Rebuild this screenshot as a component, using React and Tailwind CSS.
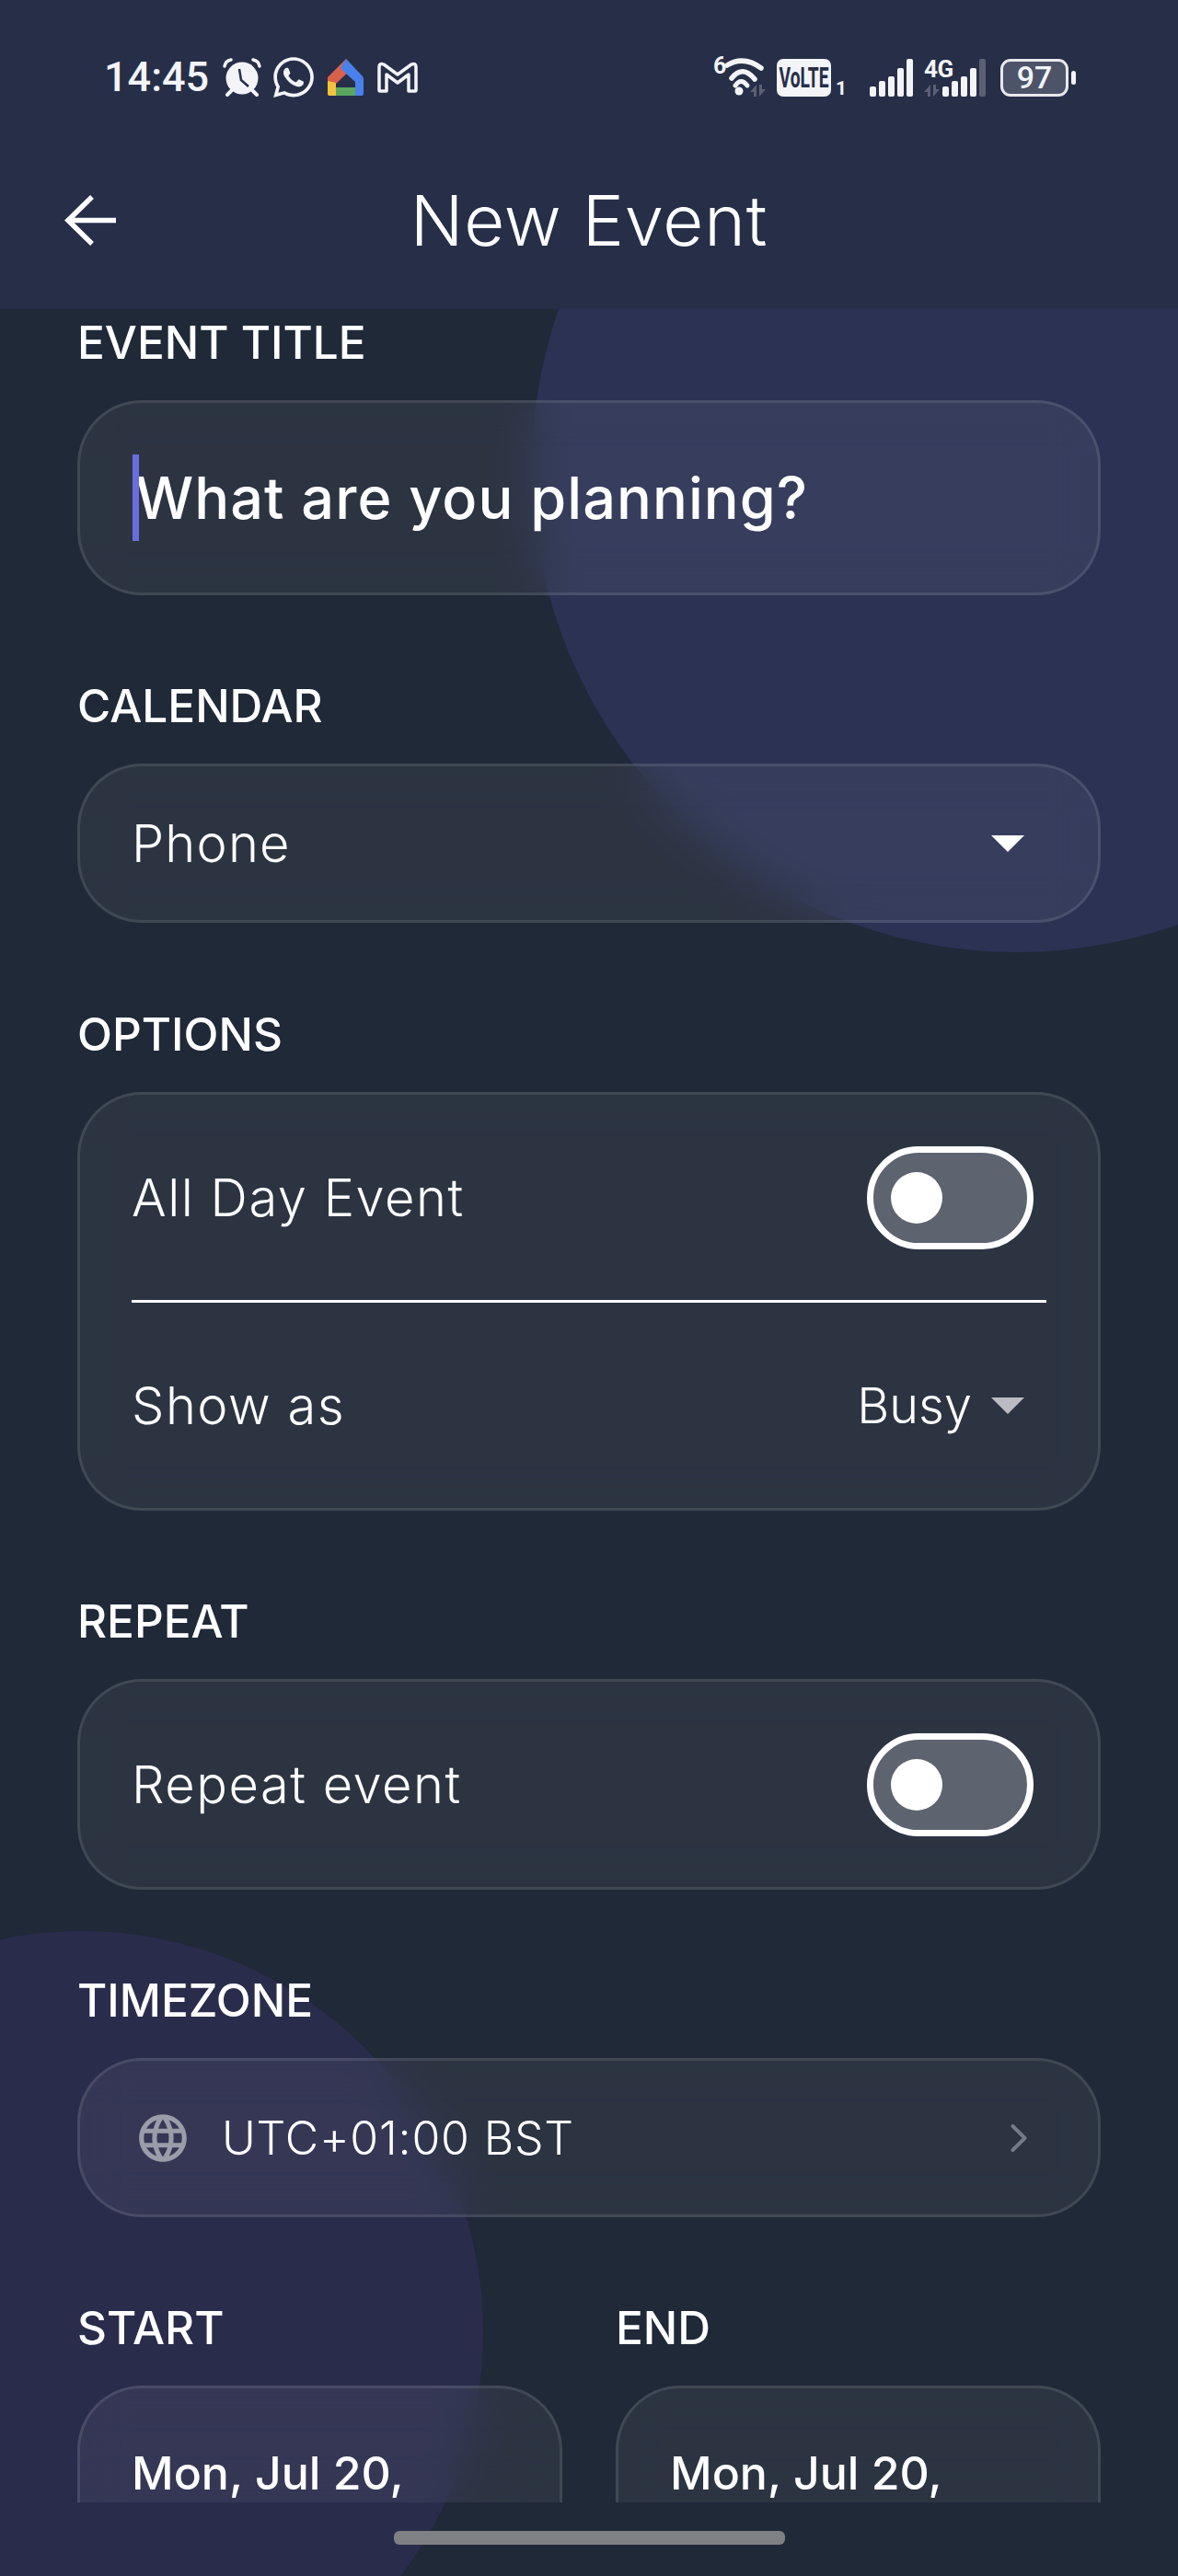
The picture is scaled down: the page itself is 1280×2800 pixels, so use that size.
import React from 'react';
import { ChevronRight } from 'lucide-react';
import { FaWhatsapp } from 'react-icons/fa';
import { MdLanguage } from 'react-icons/md';

const AlarmIcon = () => (
  <svg width="40" height="40" viewBox="0 0 40 40" className="shrink-0 overflow-visible">
    <path d="M1 8 Q2 2 8 1" fill="none" stroke="#f3f4f8" strokeWidth="3.5" strokeLinecap="round" />
    <path d="M39 8 Q38 2 32 1" fill="none" stroke="#f3f4f8" strokeWidth="3.5" strokeLinecap="round" />
    <path d="M9 34 L4 39 M31 34 L36 39" stroke="#f3f4f8" strokeWidth="4" strokeLinecap="round" />
    <circle cx="20" cy="21" r="17.5" fill="#f3f4f8" />
    <path d="M17 11 L19 23 L27 30" fill="none" stroke="#262e48" strokeWidth="2.5" />
  </svg>
);

const HomeIcon = () => (
  <svg width="40" height="40" viewBox="0 0 40 40" className="shrink-0">
    <path d="M20 0 L28 9 L9 27 L0 33 V20 Z" fill="#d9604a" />
    <path d="M20 0 L38 19 Q39 20 39 22 V38 Q39 40 37 40 H30 V25 L20 16 L14 10 Z" fill="#4a80ec" />
    <path d="M0 24 L9 26 V40 H2 Q0 40 0 38 Z" fill="#f4c33d" />
    <rect x="9" y="31" width="21" height="9" fill="#5aa65e" />
  </svg>
);

const GmailIcon = () => (
  <svg width="44" height="34" viewBox="0 0 44 34" className="shrink-0">
    <path
      d="M2 31 V6 Q2 1 7 3 L22 14 L37 3 Q42 1 42 6 V31 Q42 32 41 32 H34 V14 L22 23 L10 14 V32 H3 Q2 32 2 31 Z"
      fill="none"
      stroke="#f3f4f8"
      strokeWidth="3.5"
      strokeLinejoin="round"
    />
  </svg>
);

const TransferArrows = () => (
  <svg width="17" height="13" viewBox="0 0 17 13" className="block">
    <path d="M7 0 L0 8 H4 V13 H7 Z M10 0 V13 L17 5 H13 V0 Z" fill="#5b6074" />
  </svg>
);

const WifiIcon = () => (
  <div className="relative w-[57px] h-[42px] shrink-0">
    <span className="absolute left-0 top-[-4px] text-[25px] leading-[25px] font-bold text-[#f3f4f8]">6</span>
    <svg width="57" height="42" viewBox="0 0 57 42" className="block overflow-visible">
      <path d="M15 8 Q33 -3 52 11" fill="none" stroke="#f3f4f8" strokeWidth="5.5" strokeLinecap="round" />
      <path d="M20 22 Q32 7 45 23" fill="none" stroke="#f3f4f8" strokeWidth="5.5" strokeLinecap="round" />
      <path d="M24 30 Q30 21 37 30" fill="none" stroke="#f3f4f8" strokeWidth="5" strokeLinecap="round" />
      <circle cx="28" cy="36" r="4.5" fill="#f3f4f8" />
    </svg>
    <div className="absolute right-0 bottom-[0px]">
      <TransferArrows />
    </div>
  </div>
);

const SignalBars = ({ dimLast }) => {
  const bars = ['h-[11px]', 'h-[17px]', 'h-[22px]', 'h-[31px]', 'h-[41px]'];
  return (
    <div className="flex items-end gap-[3px] h-[41px]">
      {bars.map((h, i) => (
        <div
          key={h}
          className={`w-[7px] rounded-[2px] ${h} ${dimLast && i === 4 ? 'bg-[#5b6074]' : 'bg-[#f3f4f8]'}`}
        />
      ))}
    </div>
  );
};

const StatusBar = () => (
  <div className="h-[42px] mt-[63px] pl-[113px] pr-[111px] flex items-center justify-between text-[#f3f4f8] font-['Roboto',sans-serif]">
    <div className="flex items-center">
      <span className="text-[45px] leading-[42px] font-medium w-[130px]">14:45</span>
      <AlarmIcon />
      <FaWhatsapp className="ml-[14px] w-[44px] h-[50px] shrink-0" />
      <div className="ml-[15px]">
        <HomeIcon />
      </div>
      <div className="ml-[14px]">
        <GmailIcon />
      </div>
    </div>
    <div className="flex items-center">
      <WifiIcon />
      <div className="ml-[12px] w-[59px] h-[41px] rounded-[7px] bg-[#f3f4f8] flex items-center justify-center overflow-hidden">
        <span className="text-[31px] leading-[31px] font-bold text-[#262e48] scale-x-[0.62]">VoLTE</span>
      </div>
      <span className="ml-[5px] w-[7px] self-end text-[21px] leading-[18px] font-bold">1</span>
      <div className="ml-[30px]">
        <SignalBars />
      </div>
      <div className="relative ml-[12px] w-[67px] h-[41px] flex justify-end">
        <span className="absolute left-0 top-[-2px] text-[26px] leading-[26px] font-bold tracking-[-0.5px]">4G</span>
        <div className="absolute left-0 bottom-[0px]">
          <TransferArrows />
        </div>
        <SignalBars dimLast />
      </div>
      <div className="ml-[16px] w-[74px] h-[41px] rounded-[11px] border-[3px] border-[#e8e9ee] bg-[#4d5369] flex items-center justify-center">
        <span className="text-[34px] leading-[34px] font-medium text-[#f3f4f8]">97</span>
      </div>
      <div className="ml-[3px] w-[5px] h-[15px] rounded-full bg-[#f3f4f8]" />
    </div>
  </div>
);

const AppBar = () => (
  <div className="grid grid-cols-[1fr_auto_1fr] items-center h-[96px] mt-[86px]">
    <svg width="56" height="55" viewBox="0 0 56 55" className="ml-[70px]">
      <path d="M56 27.5 H4" fill="none" stroke="#fff" strokeWidth="5.5" />
      <path d="M30 2 L4 27.5 L30 53" fill="none" stroke="#fff" strokeWidth="5.5" />
    </svg>
    <h1 className="text-[76px] leading-[96px] font-light text-white tracking-[0.8px]">New Event</h1>
    <div />
  </div>
);

const Label = ({ children }) => (
  <div className="text-[49.5px] leading-[56px] font-medium text-white mb-[35px]">{children}</div>
);

const Card = ({ className = '', children }) => (
  <div className={`rounded-[70px] border-[3px] border-white/10 bg-white/[0.055] backdrop-blur-[24px] ${className}`}>
    {children}
  </div>
);

const Caret = ({ className }) => (
  <svg width="36" height="18" viewBox="0 0 36 18" className={className}>
    <path d="M0 0 H36 L18 18 Z" />
  </svg>
);

const Toggle = () => (
  <div className="w-[181px] h-[112px] rounded-full border-[7px] border-white bg-[#5e6370] flex items-center pl-[19px] shrink-0">
    <div className="w-[56px] h-[56px] rounded-full bg-white" />
  </div>
);

const Row = ({ label, children }) => (
  <div className="h-[223px] flex items-center justify-between pl-[56px] pr-[70px]">
    <span className="text-[56px] leading-[76px] text-white tracking-[1.5px] font-light">{label}</span>
    {children}
  </div>
);

export default function App() {
  return (
    <div className="relative w-[1280px] h-[2800px] overflow-hidden bg-[#202938] font-['Inter',sans-serif]">
      {/* background blobs */}
      <div className="absolute left-[578px] top-[-19px] w-[1054px] h-[1054px] rounded-full bg-[#2c3254]" />
      <div className="absolute left-[-347px] top-[2099px] w-[872px] h-[872px] rounded-full bg-[#2a2c4c]" />

      <header className="relative z-10 h-[336px] bg-[#262e48] flex flex-col">
        <StatusBar />
        <AppBar />
      </header>

      <main className="relative h-[2384px] overflow-hidden px-[84px] pt-[8px]">
        <section className="mb-[92px]">
          <Label>EVENT TITLE</Label>
          <Card className="h-[212px] flex items-center pl-[57px] pr-[56px]">
            <div className="relative z-10 w-[7px] h-[94px] mr-[-4px] bg-[#6a6de0] shrink-0" />
            <span className="text-[63px] leading-[80px] font-medium text-white tracking-[1.05px]">What are you planning?</span>
          </Card>
        </section>

        <section className="mb-[93px]">
          <Label>CALENDAR</Label>
          <Card className="h-[173px] flex items-center justify-between pl-[56px] pr-[80px]">
            <span className="text-[56px] leading-[76px] text-white tracking-[1.2px] font-light">Phone</span>
            <Caret className="fill-white" />
          </Card>
        </section>

        <section className="mb-[92px]">
          <Label>OPTIONS</Label>
          <Card>
            <Row label="All Day Event">
              <Toggle />
            </Row>
            <div className="mx-[56px] h-[3px] bg-white" />
            <Row label="Show as">
              <div className="flex items-center gap-[21px] mr-[10px]">
                <span className="text-[54px] leading-[76px] text-white font-light">Busy</span>
                <Caret className="fill-[#babcc2]" />
              </div>
            </Row>
          </Card>
        </section>

        <section className="mb-[92px]">
          <Label>REPEAT</Label>
          <Card>
            <Row label="Repeat event">
              <Toggle />
            </Row>
          </Card>
        </section>

        <section className="mb-[92px]">
          <Label>TIMEZONE</Label>
          <Card className="h-[173px] flex items-center pl-[59px] pr-[60px]">
            <MdLanguage className="w-[62px] h-[62px] text-[#9a9da9] shrink-0" />
            <span className="ml-[33px] flex-1 text-[50px] leading-[70px] text-white tracking-[0.8px] font-light">UTC+01:00 BST</span>
            <ChevronRight size={52} strokeWidth={1.8} className="text-[#767b86]" />
          </Card>
        </section>

        <section className="grid grid-cols-2 gap-[58px]">
          <div>
            <Label>START</Label>
            <Card className="h-[300px] px-[56px] pt-[62px]">
              <div className="text-[50px] leading-[60px] font-medium text-white">Mon, Jul 20,</div>
            </Card>
          </div>
          <div>
            <Label>END</Label>
            <Card className="h-[300px] px-[56px] pt-[62px]">
              <div className="text-[50px] leading-[60px] font-medium text-white">Mon, Jul 20,</div>
            </Card>
          </div>
        </section>
      </main>

      {/* home indicator */}
      <div className="relative h-[80px] flex justify-center pt-[31px]">
        <div className="w-[425px] h-[15px] rounded-[6px] bg-[#7f8083]" />
      </div>
    </div>
  );
}
